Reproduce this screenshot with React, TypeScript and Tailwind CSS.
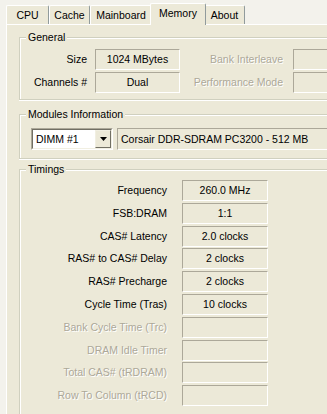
import React from 'react';

type Timing = { label: string; value?: string; disabled?: boolean };

const timings: Timing[] = [
  { label: 'Frequency', value: '260.0 MHz' },
  { label: 'FSB:DRAM', value: '1:1' },
  { label: 'CAS# Latency', value: '2.0 clocks' },
  { label: 'RAS# to CAS# Delay', value: '2 clocks' },
  { label: 'RAS# Precharge', value: '2 clocks' },
  { label: 'Cycle Time (Tras)', value: '10 clocks' },
  { label: 'Bank Cycle Time (Trc)', disabled: true },
  { label: 'DRAM Idle Timer', disabled: true },
  { label: 'Total CAS# (tRDRAM)', disabled: true },
  { label: 'Row To Column (tRCD)', disabled: true },
];

const tabs = ['CPU', 'Cache', 'Mainboard', 'Memory', 'About'];
const tabWidths: Record<string, string> = {
  CPU: 'w-[43px]',
  Cache: 'w-[41px]',
  Mainboard: 'w-[62px]',
  Memory: 'w-[56px]',
  About: 'w-[41px]',
};

const Field: React.FC<{ className?: string; children?: React.ReactNode }> = ({ className = '', children }) => (
  <div
    className={`h-[21px] shrink-0 flex items-center justify-center border border-t-[#aca899] border-l-[#aca899] border-r-white border-b-white ${className}`}
  >
    {children}
  </div>
);

const Label: React.FC<{ disabled?: boolean; className?: string; children: React.ReactNode }> = ({ disabled, className = '', children }) => (
  <div
    className={`shrink-0 text-right whitespace-nowrap ${disabled ? 'text-[#aca899] [text-shadow:1px_1px_0_#fff]' : 'text-black'} ${className}`}
  >
    {children}
  </div>
);

// etched group box, running off the right edge like the original window
const Group: React.FC<{ title: string; className?: string; bodyClass?: string; children: React.ReactNode }> = ({
  title,
  className = '',
  bodyClass = '',
  children,
}) => (
  <div className={className}>
    <div className="flex h-[13px]">
      <div className="w-[7px] h-[7px] mt-[6px] border-t border-l border-[#d0d0bf] shadow-[inset_1px_1px_0_#fff]" />
      <div className="px-[2px] leading-[13px] whitespace-nowrap">{title}</div>
      <div className="flex-1 h-[7px] mt-[6px] border-t border-[#d0d0bf] shadow-[inset_0_1px_0_#fff]" />
    </div>
    <div className={`border-l border-b border-[#d0d0bf] shadow-[0_1px_0_#fff,inset_1px_0_0_#fff] ${bodyClass}`}>
      {children}
    </div>
  </div>
);

export default function App() {
  return (
    <div className="w-[327px] h-[414px] overflow-hidden bg-[#ece9d8] font-['Liberation_Sans',Arial,sans-serif] text-[10.5px] leading-[13px] text-black">
      {/* tab strip */}
      <div className="h-[24px] pt-[3px] pl-[6px] flex items-end bg-[#f3f2ec]">
        {tabs.map((t) => {
          const active = t === 'Memory';
          return (
            <div
              key={t}
              className={`${tabWidths[t]} flex items-center justify-center rounded-t-[2px] border-t border-l border-r border-t-white border-l-white border-r-[#919b9c] ${
                active
                  ? 'relative z-10 h-[22px] -mx-[2px] -mb-px pb-[3px] bg-[#ece9d8]'
                  : 'h-[19px] bg-[#ece9d8]'
              }`}
            >
              {t}
            </div>
          );
        })}
      </div>

      <div className="flex h-[390px]">
        <div className="w-[6px] shrink-0 bg-[#f3f2ec]" />
        {/* tab panel */}
        <div className="flex-1 min-w-0 bg-[#ece9d8] border-l border-t border-white pl-[12px]">
          <Group title="General" className="mt-[6px]" bodyClass="pt-[5px] pb-[6px]">
            <div className="flex flex-col gap-[2px]">
              <div className="flex items-center">
                <Label className="w-[67px]">Size</Label>
                <Field className="ml-[8px] w-[85px]">1024 MBytes</Field>
                <Label disabled className="w-[103px]">Bank Interleave</Label>
                <Field className="ml-[10px] flex-1 !shrink border-r-0" />
              </div>
              <div className="flex items-center">
                <Label className="w-[67px]">Channels #</Label>
                <Field className="ml-[8px] w-[85px]">Dual</Field>
                <Label disabled className="w-[103px]">Performance Mode</Label>
                <Field className="ml-[10px] flex-1 !shrink border-r-0" />
              </div>
            </div>
          </Group>

          <Group title="Modules Information" className="mt-[8px]" bodyClass="pt-[7px] pb-[8px] pl-[11px]">
            <div className="flex items-center">
              <div className="w-[82px] h-[22px] shrink-0 border border-t-[#aca899] border-l-[#aca899] border-r-white border-b-white">
                <div className="h-full flex bg-white border border-t-[#716f64] border-l-[#716f64] border-r-[#f1efe2] border-b-[#f1efe2]">
                  <div className="flex-1 flex items-center pl-[3px]">DIMM #1</div>
                  <div className="w-[16px] h-full flex items-center justify-center bg-[#ece9d8] border border-t-[#f1efe2] border-l-[#f1efe2] border-r-[#716f64] border-b-[#716f64]">
                    <svg width="7" height="4" viewBox="0 0 7 4">
                      <path d="M0 0h7L3.5 4z" fill="#000" />
                    </svg>
                  </div>
                </div>
              </div>
              <Field className="ml-[4px] flex-1 !shrink min-w-0 h-[22px] border-r-0 !justify-start pl-[3px] whitespace-nowrap overflow-hidden">
                Corsair DDR-SDRAM PC3200 - 512 MB
              </Field>
            </div>
          </Group>

          <Group title="Timings" className="mt-[4px]" bodyClass="pt-[4px] h-[300px]">
            <div className="flex flex-col gap-[1.8px]">
              {timings.map((row) => (
                <div key={row.label} className="flex items-center">
                  <Label disabled={row.disabled} className="w-[147px]">
                    {row.label}
                  </Label>
                  <Field className="ml-[15px] w-[86px]">{row.value}</Field>
                </div>
              ))}
            </div>
          </Group>
        </div>
      </div>
    </div>
  );
}
